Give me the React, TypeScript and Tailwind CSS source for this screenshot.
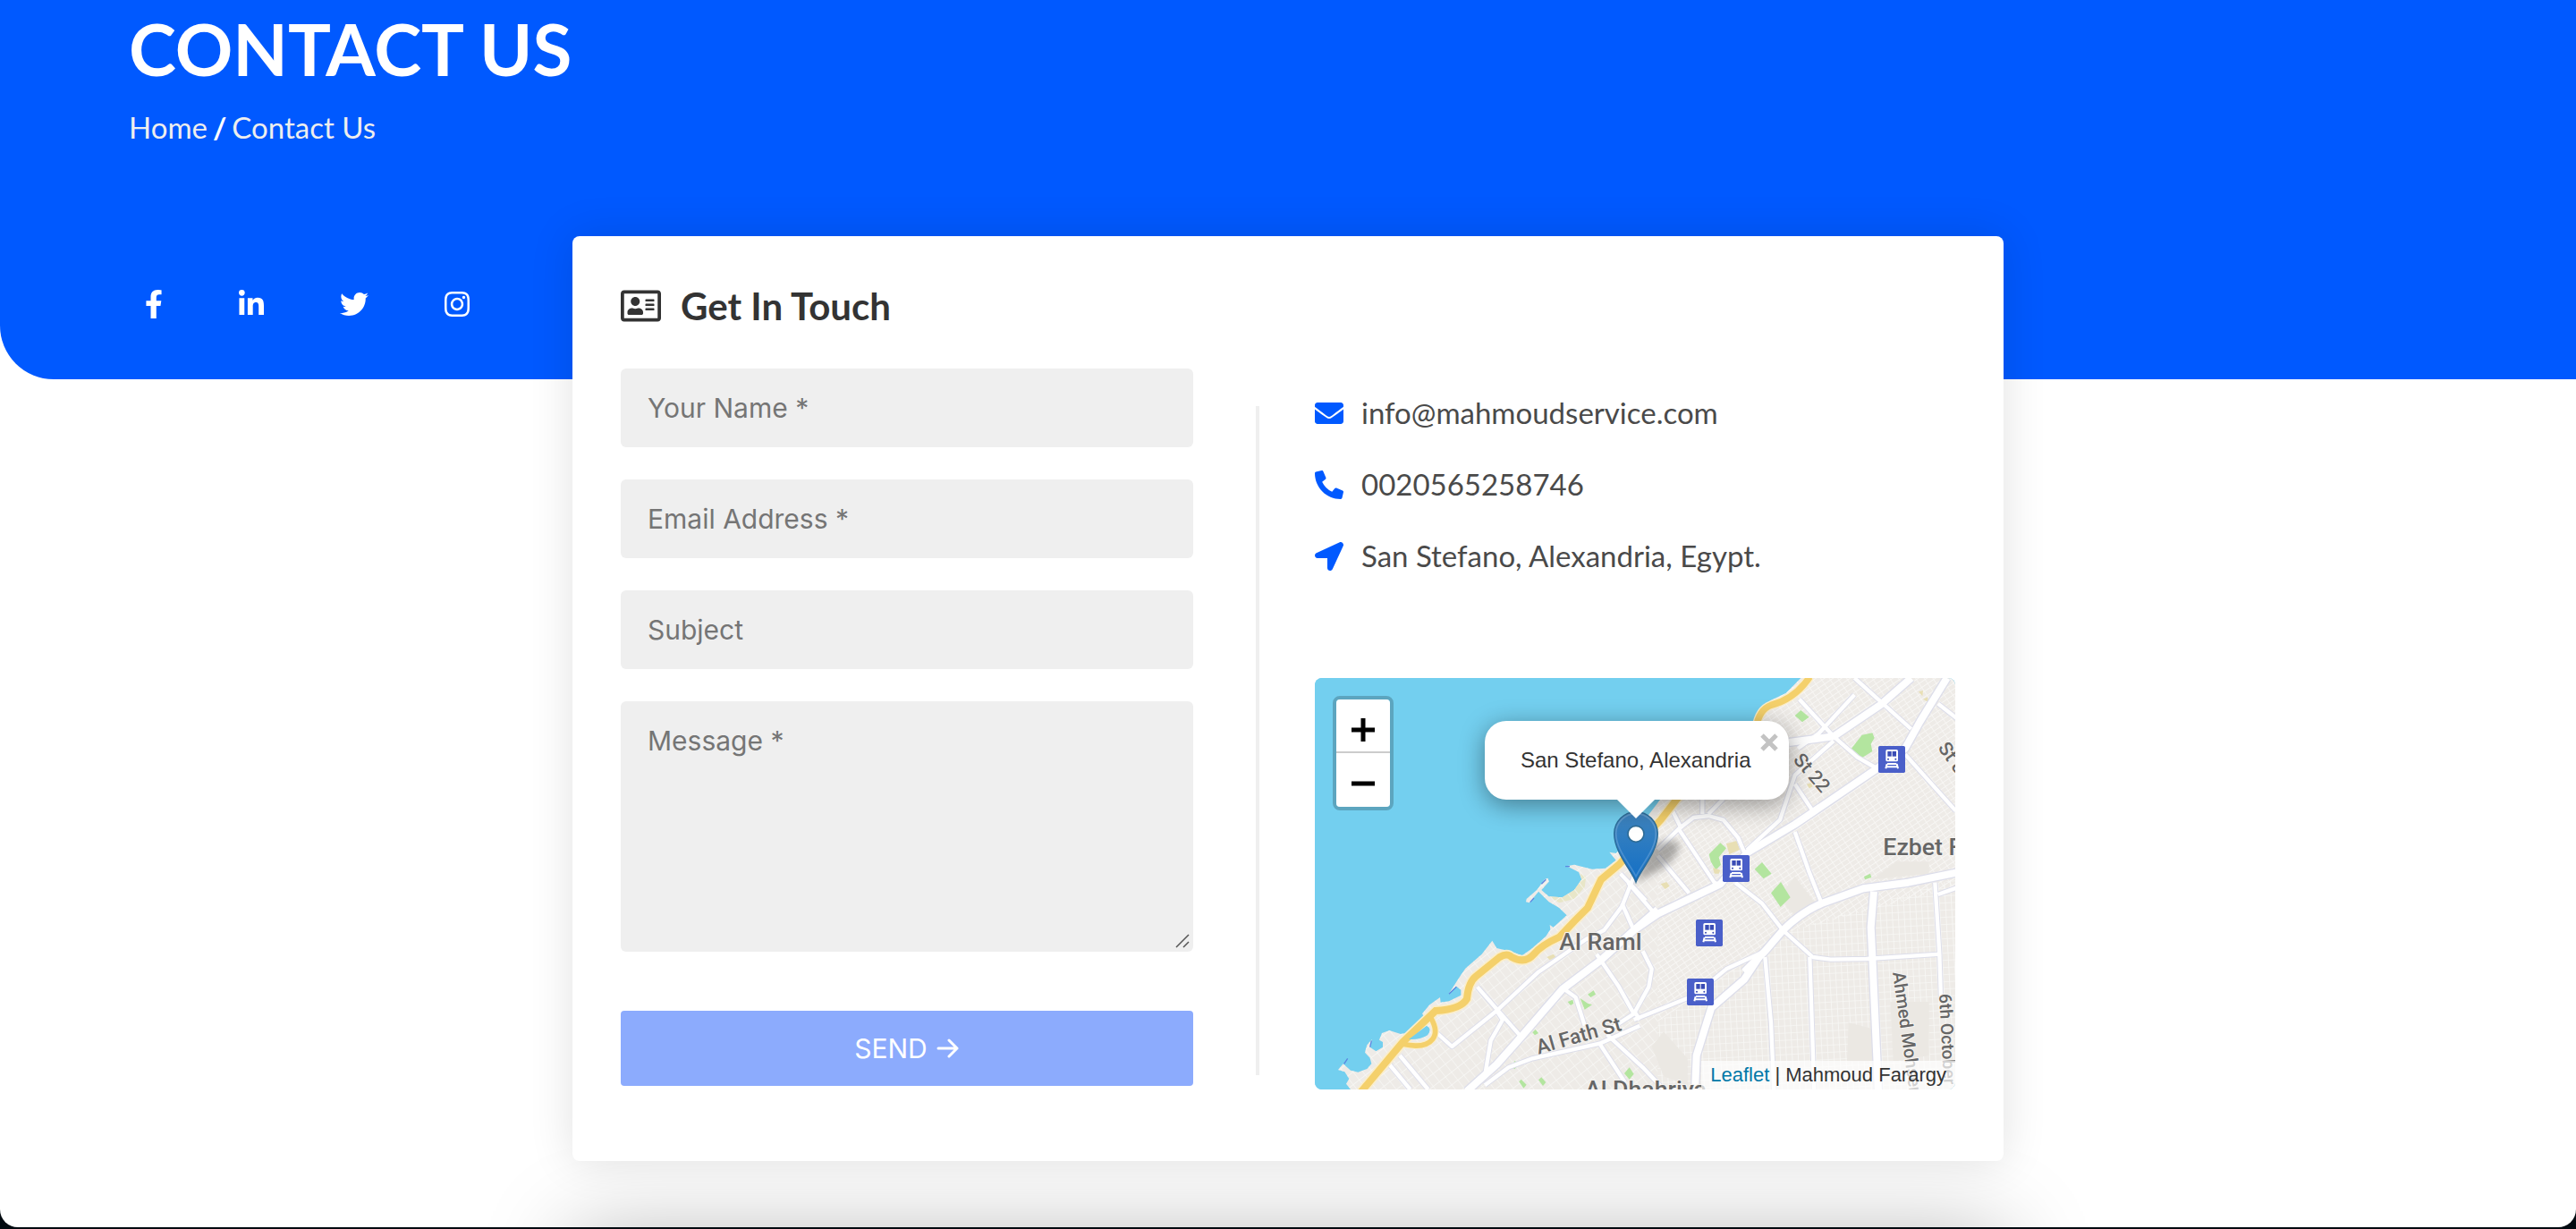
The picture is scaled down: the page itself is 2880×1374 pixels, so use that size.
import type { ReactNode } from "react";
import {
  FaFacebookF,
  FaLinkedinIn,
  FaTwitter,
  FaInstagram,
  FaRegAddressCard,
  FaEnvelope,
  FaPhoneAlt,
  FaLocationArrow,
} from "react-icons/fa";

const ROAD_CASING = "#dddeea";

function Train({ x, y }: { x: number; y: number }) {
  return (
    <g transform={`translate(${x} ${y})`}>
      <rect width="90" height="90" rx="5" fill="#4a5fc9" />
      <rect x="25" y="12" width="41" height="40" rx="5" fill="#fff" />
      <rect x="31" y="18" width="13" height="17" fill="#3a4cb5" />
      <rect x="47" y="18" width="13" height="17" fill="#3a4cb5" />
      <circle cx="33" cy="44" r="3" fill="#3a4cb5" />
      <circle cx="58" cy="44" r="3" fill="#3a4cb5" />
      <path d="M30 60h31M29 60l-4 16M62 60l4 16M27 70h37" stroke="#fff" strokeWidth="6" fill="none" />
    </g>
  );
}

const COAST =
  "M150 1404L135 1385L145 1368L130 1345L108 1338L125 1318L150 1340L175 1346L205 1335L220 1318L215 1298L198 1280L205 1255L222 1235L215 1262L235 1276L258 1262L258 1245L246 1238L255 1215L280 1206L318 1218L350 1212L400 1165L390 1150L415 1120L450 1095L452 1112L480 1108L520 1088L520 1070L505 1058L480 1082L510 1035L535 998L590 950L625 905L640 930L690 942L725 955L760 930L805 890L820 868L818 852L830 860L875 820L850 795L815 775L780 740L750 778L738 775L740 765L775 735L800 700L812 695L815 707L790 735L815 757L860 760L900 735L925 700L915 675L875 655L900 650L960 665L1005 662L1040 635L1018 608L1040 612L1090 560L1190 430L1320 290L1500 180L1520 130L1560 98L1610 75L1660 24L2200 24L2200 1410Z";

const COAST_ROAD =
  "M185 1412L325 1245L435 1140Q520 1135 540 1100Q545 1045 570 1025L650 960Q675 945 690 960Q735 985 765 950Q790 920 850 893L900 840L945 795L990 700L1050 650L1190 500L1260 410";
const COAST_LOOP = "M325 1252Q400 1268 425 1235Q445 1210 420 1165";
const COAST_NORTH = "M1510 190Q1520 130 1560 115Q1640 95 1690 20";

const MAJOR: string[] = [
  "M1100 870L1180 815L1390 715L1480 610L1640 515L1780 420L1905 335L2010 260L2060 170L2150 24",
  "M540 1410L640 1320L720 1230L860 1068L990 970L1100 870L1180 800",
  "M1520 960L1470 1035L1360 1130L1310 1290L1305 1410",
  "M1470 1010L1540 940L1600 870Q1660 810 1730 780L1870 730L2020 710L2190 675",
  "M1905 740L1895 860L1900 960L1920 1410",
  "M1620 240L1770 220L1930 112L2030 24",
];

const MINOR: string[] = [
  "M1055 680L1140 770M1100 690L1060 790L1000 870L940 900L780 1010L640 1140L490 1260L440 1215",
  "M1060 780L1100 870M575 1060L720 1225M640 1140L660 1170L620 1240L600 1360",
  "M870 1070L905 1095L935 1190M975 950L1050 1060L1100 1150L1150 1060L1160 1000L1130 940",
  "M1100 1150L1000 1215M1100 1170L1300 1090L1410 1000L1540 940M1100 1140L1120 1170",
  "M280 1320L350 1404M315 1290L410 1404",
  "M600 1390L680 1330L760 1300L985 1250L1120 1190M985 1250L1070 1380M1010 1220L1130 1330L1200 1404",
  "M1180 600L1250 530L1300 492L1350 486L1400 500L1450 560L1475 620M1250 530L1370 710L1390 720",
  "M1180 620L1285 745M1230 470L1260 530M1330 480L1330 430M1350 480L1400 430",
  "M1480 600L1590 500L1610 440L1640 350L1770 235M1650 260L1720 210L1840 80",
  "M1640 380L1700 470M1640 540L1690 680L1730 780M1440 710L1530 780L1600 870",
  "M1655 95L1770 220L1850 290L1920 330M1840 24L2030 195M1600 870L1700 960L1760 968L1880 966L2130 950",
  "M1540 960L1560 1180L1570 1410M1690 960L1705 1410M2110 710L2125 950L2130 1100M2120 750L2190 725",
  "M2010 280L2180 470M2120 110L2190 165",
  "M1080 710L1175 820",
];

const GREEN: string[] = [
  "M1830 260L1865 215L1900 208L1907 225L1895 245L1900 270L1865 292Z",
  "M1352 615L1390 577L1410 595L1385 625L1392 650L1375 668L1358 640Z",
  "M1505 665L1530 642L1562 680L1535 697Z",
  "M1560 745L1593 708L1625 760L1592 792Z",
  "M1640 150L1660 132L1688 155L1665 172Z",
  "M920 1098L945 1115L960 1120L935 1136Z",
  "M945 1085L965 1072L972 1085L955 1095Z",
  "M878 1110L895 1103L898 1115L888 1122Z",
  "M760 1213L770 1203L780 1215L768 1222Z",
  "M690 1330L700 1308L716 1318L700 1336Z",
  "M715 1378L722 1370L740 1388L730 1400Z",
  "M780 1372L790 1363L805 1380L795 1392Z",
  "M1068 1350L1085 1330L1100 1352L1085 1370Z",
  "M648 1350L660 1340L666 1350L655 1357Z",
  "M1872 690L1893 680L1897 693L1875 700Z",
];

function MapTiles() {
  return (
    <svg
      className="absolute inset-0 h-full w-full"
      viewBox="30 24 2148 1380"
      preserveAspectRatio="xMidYMid slice"
      aria-hidden="true"
    >
      <defs>
        <pattern id="streets" width="34" height="26" patternUnits="userSpaceOnUse" patternTransform="rotate(52)">
          <path d="M0 1H34M1 0V26" stroke="#f8f7f5" strokeWidth="3" fill="none" />
        </pattern>
        <pattern id="streetsEast" width="24" height="16" patternUnits="userSpaceOnUse" patternTransform="rotate(-34)">
          <path d="M0 1H24M1 0V16" stroke="#f8f7f5" strokeWidth="3" fill="none" />
        </pattern>
        <pattern id="streetsGrid" width="20" height="24" patternUnits="userSpaceOnUse" patternTransform="rotate(-3)">
          <path d="M0 1H20M1 0V24" stroke="#f8f7f5" strokeWidth="3" fill="none" />
        </pattern>
        <clipPath id="land">
          <path d={COAST} />
        </clipPath>
        <linearGradient id="pin" x1="0" y1="0" x2="0" y2="1">
          <stop offset="0" stopColor="#4084bd" />
          <stop offset="1" stopColor="#126fc6" />
        </linearGradient>
        <filter id="soft" x="-40%" y="-40%" width="180%" height="180%">
          <feGaussianBlur stdDeviation="13" />
        </filter>
      </defs>
      <rect x="0" y="0" width="2200" height="1420" fill="#73cfef" />
      <path d={COAST} fill="#eeebe7" />
      <path d="M815 757L860 760L900 735L925 700L920 680L940 690L935 725L900 765L850 778Z" fill="#e8e6c8" />
      <g clipPath="url(#land)">
        <path d="M0 800L1180 560L1180 1410H0Z" fill="url(#streets)" />
        <path d="M1180 0H2200V720L1600 880L1440 1000L1180 1180Z" fill="url(#streetsEast)" />
        <path d="M1180 1180L1440 1000L1600 880L2200 690V1410H1180Z" fill="url(#streetsGrid)" />
        <path
          d="M1600 740L1640 690L1710 780L1640 820L1610 790ZM1160 1260L1200 1210L1280 1300V1390L1200 1360ZM1820 1180L1900 1200V1310H1815ZM1960 1110H2090V1290L1970 1310ZM1980 640H2090V680L1900 700Z"
          fill="#ebe8e3"
        />
        {GREEN.map((d) => (
          <path key={d} d={d} fill="#b3e59f" />
        ))}
        <path
          d="M1410 580L1445 570L1455 600L1420 615ZM1365 660L1390 668L1385 680L1370 680ZM1190 715L1210 708L1220 722L1205 732ZM808 960L830 950L838 960L818 970ZM1680 380L1695 375L1700 388L1688 394ZM2055 70L2070 66L2068 85ZM2070 95L2085 88L2088 105Z"
          fill="#e8dfb4"
        />
        {MINOR.map((d) => (
          <path key={d} d={d} stroke={ROAD_CASING} strokeWidth="19" fill="none" strokeLinejoin="round" />
        ))}
        {MAJOR.map((d) => (
          <path key={d} d={d} stroke={ROAD_CASING} strokeWidth="32" fill="none" strokeLinejoin="round" />
        ))}
        {MINOR.map((d) => (
          <path key={d} d={d} stroke="#fff" strokeWidth="13" fill="none" strokeLinejoin="round" />
        ))}
        {MAJOR.map((d) => (
          <path key={d} d={d} stroke="#fff" strokeWidth="24" fill="none" strokeLinejoin="round" />
        ))}
      </g>
      <path d={COAST_ROAD} stroke="#fbeecb" strokeWidth="34" fill="none" />
      <path d={COAST_LOOP} stroke="#fbeecb" strokeWidth="24" fill="none" />
      <path d={COAST_NORTH} stroke="#fbeecb" strokeWidth="30" fill="none" />
      <path d={COAST_ROAD} stroke="#f4d06b" strokeWidth="24" fill="none" />
      <path d={COAST_LOOP} stroke="#f4d06b" strokeWidth="17" fill="none" />
      <path d={COAST_NORTH} stroke="#f4d06b" strokeWidth="22" fill="none" />
      <path d="M345 1236L405 1190Q425 1200 408 1222Q385 1238 345 1236Z" fill="#73cfef" />
      <path
        d="M140 1300L128 1318M215 1262L220 1240M480 1084L505 1060M790 715L805 700M752 776L765 762M870 656H885"
        stroke="#5b87e0"
        strokeWidth="4"
      />

      <Train x={1920} y={252} />
      <Train x={1398} y={618} />
      <Train x={1308} y={834} />
      <Train x={1278} y={1032} />

      <g
        fontFamily="Roboto, 'Open Sans', sans-serif"
        fontWeight="500"
        fill="#666"
        stroke="#f6f4f1"
        strokeWidth="6"
        paintOrder="stroke"
        strokeLinejoin="round"
      >
        <text x="850" y="936" fontSize="80">Al Raml</text>
        <text x="1936" y="618" fontSize="80">Ezbet Fa</text>
        <text x="936" y="1430" fontSize="80">Al Dhahriya</text>
        <text x="0" y="0" fontSize="68" transform="translate(780 1286) rotate(-16)">Al Fath St</text>
        <text x="0" y="0" fontSize="64" transform="translate(1632 300) rotate(49)">St 22</text>
        <text x="0" y="0" fontSize="64" transform="translate(2118 258) rotate(55)">St 8</text>
        <text x="0" y="0" fontSize="60" transform="translate(1968 1012) rotate(82)">Ahmed Mohsen</text>
        <text x="0" y="0" fontSize="58" transform="translate(2124 1084) rotate(87)">6th October</text>
      </g>

      <path d="M1107 709L1150 590Q1200 560 1250 575Q1260 610 1200 660Z" fill="#000" opacity=".3" filter="url(#soft)" />
      <path
        d="M1107 709C1095 672 1034 610 1034 546A73 73 0 0 1 1180 546C1180 610 1119 672 1107 709Z"
        fill="url(#pin)"
        stroke="#2e6c97"
        strokeWidth="4"
      />
      <path
        d="M1107 690C1092 655 1040 600 1040 546A67 67 0 0 1 1174 546C1174 600 1122 655 1107 690Z"
        fill="none"
        stroke="#fff"
        strokeOpacity=".18"
        strokeWidth="5"
      />
      <circle cx="1107" cy="547" r="27" fill="#fff" stroke="#2e6c97" strokeWidth="5" />
    </svg>
  );
}

function LocationMap() {
  return (
    <section
      aria-label="Map of San Stefano, Alexandria"
      className="relative h-[460px] w-full overflow-hidden rounded-lg bg-[#73cfef] font-['Liberation_Sans',Arial,sans-serif]"
    >
      <MapTiles />
      <div className="absolute top-5 left-5 flex flex-col rounded-lg border-4 border-black/20 bg-clip-padding">
        <button
          type="button"
          aria-label="Zoom in"
          className="flex h-[60px] w-[60px] items-center justify-center rounded-t-sm border-b-2 border-[#ccc] bg-white pt-2.5"
        >
          <svg width="26" height="26" viewBox="0 0 26 26" aria-hidden="true">
            <path d="M13 0v26M0 13h26" stroke="#000" strokeWidth="5" />
          </svg>
        </button>
        <button
          type="button"
          aria-label="Zoom out"
          className="flex h-[60px] w-[60px] items-center justify-center rounded-b-sm bg-white pt-2"
        >
          <svg width="26" height="26" viewBox="0 0 26 26" aria-hidden="true">
            <path d="M0 13h26" stroke="#000" strokeWidth="5" />
          </svg>
        </button>
      </div>

      <div className="absolute top-12 left-[190px] flex h-[88px] w-[340px] items-center rounded-3xl bg-white pl-10 shadow-[0_6px_28px_rgba(0,0,0,0.4)]">
        <p className="text-[24px] whitespace-nowrap text-[#333]">San Stefano, Alexandria</p>
        <button type="button" aria-label="Close popup" className="absolute top-3.5 right-3">
          <svg width="20" height="20" viewBox="0 0 20 20" aria-hidden="true">
            <path d="M2 2l16 16M18 2L2 18" stroke="#c3c3c3" strokeWidth="5" />
          </svg>
        </button>
        <svg className="absolute top-full left-[148px]" width="42" height="21" viewBox="0 0 42 21" aria-hidden="true">
          <path d="M0 0h42L21 21z" fill="#fff" />
        </svg>
      </div>

      <div className="absolute right-0 bottom-0 bg-white/70 px-2.5 text-[22px] leading-8 text-[#333]">
        <a href="#leaflet" className="text-[#0078a8]">
          Leaflet
        </a>{" "}
        | Mahmoud Farargy
      </div>
    </section>
  );
}

const FIELD =
  "block w-full rounded-md bg-[#efefef] px-[30px] font-[Inter,sans-serif] text-[30px] text-[#444] outline-none placeholder:text-[#757575] placeholder:opacity-100";

function ContactLine({ icon, children }: { icon: ReactNode; children: ReactNode }) {
  return (
    <li className="flex h-12 items-center gap-5">
      <span className="text-[32px] text-[#0059ff]">{icon}</span>
      {children}
    </li>
  );
}

export default function App() {
  return (
    <div className="h-screen overflow-hidden bg-[#020a10] pb-0.5 font-[Lato,sans-serif] text-[#4a4a4a]">
      <div className="h-full overflow-hidden rounded-b-[20px] bg-white">
        <header className="flex h-[424px] flex-col rounded-bl-[60px] bg-[#0059ff] px-36 text-white">
          <h1 className="mt-1.5 text-[80px] leading-[96px] font-bold">CONTACT US</h1>
          <nav aria-label="Breadcrumb" className="mt-[18px] flex gap-1.5 text-[33px] leading-[44px]">
            <a href="#home" className="text-[#eee]">
              Home
            </a>
            <span className="font-bold">/</span>
            <a href="#contact" className="text-[#eee]">
              Contact Us
            </a>
          </nav>
          <div className="mt-auto mb-[68px] flex items-center gap-[85px] pl-[18px]">
            <a href="#facebook" aria-label="Facebook">
              <FaFacebookF className="h-8 w-5" />
            </a>
            <a href="#linkedin" aria-label="LinkedIn">
              <FaLinkedinIn className="h-8 w-7" />
            </a>
            <a href="#twitter" aria-label="Twitter">
              <FaTwitter className="h-8 w-8" />
            </a>
            <a href="#instagram" aria-label="Instagram">
              <FaInstagram className="h-8 w-7" />
            </a>
          </div>
        </header>

        <main className="relative mx-auto -mt-40 w-[1600px] max-w-full rounded-lg bg-white px-[54px] pt-[54px] pb-[84px] shadow-[0_0_50px_rgba(0,0,0,0.12)]">
          <h2 className="flex items-center gap-[22px] text-[42px] leading-[48px] font-bold text-[#333]">
            <FaRegAddressCard className="h-10 w-[45px]" />
            Get In Touch
          </h2>
          <div className="mt-[46px] flex">
            <form className="flex w-[640px] flex-col gap-9">
              <input aria-label="Your Name" placeholder="Your Name *" className={`${FIELD} h-[88px]`} />
              <input type="email" aria-label="Email Address" placeholder="Email Address *" className={`${FIELD} h-[88px]`} />
              <input aria-label="Subject" placeholder="Subject" className={`${FIELD} h-[88px]`} />
              <div className="relative">
                <textarea
                  aria-label="Message"
                  placeholder="Message *"
                  className={`${FIELD} h-[280px] resize-none py-6 leading-10`}
                />
                <svg className="absolute right-1 bottom-1" width="16" height="16" viewBox="0 0 16 16" aria-hidden="true">
                  <path d="M1 15L15 1M9 15l6-6" stroke="#555" strokeWidth="1.5" />
                </svg>
              </div>
              <button
                type="submit"
                className="mt-[30px] flex h-[84px] items-center justify-center gap-2.5 rounded bg-[#8cabfd] font-[Inter,sans-serif] text-[30px] text-white"
              >
                SEND
                <svg width="26" height="22" viewBox="0 0 26 22" fill="none" aria-hidden="true">
                  <path d="M2 11h21M14 2l9 9-9 9" stroke="#fff" strokeWidth="3" strokeLinecap="round" strokeLinejoin="round" />
                </svg>
              </button>
            </form>
            <div className="mt-[42px] mb-3 ml-[70px] w-1 bg-[#efefef]" />
            <div className="mb-[-4px] ml-[62px] flex min-w-0 flex-1 flex-col justify-between pt-[26px]">
              <ul className="flex flex-col gap-8 text-[33px]">
                <ContactLine icon={<FaEnvelope />}>info@mahmoudservice.com</ContactLine>
                <ContactLine icon={<FaPhoneAlt />}>0020565258746</ContactLine>
                <ContactLine icon={<FaLocationArrow />}>San Stefano, Alexandria, Egypt.</ContactLine>
              </ul>
              <LocationMap />
            </div>
          </div>
        </main>

        <footer className="mx-auto mt-20 h-40 w-[1600px] max-w-full bg-white shadow-[0_0_100px_rgba(0,0,0,0.27)]" />
      </div>
    </div>
  );
}
